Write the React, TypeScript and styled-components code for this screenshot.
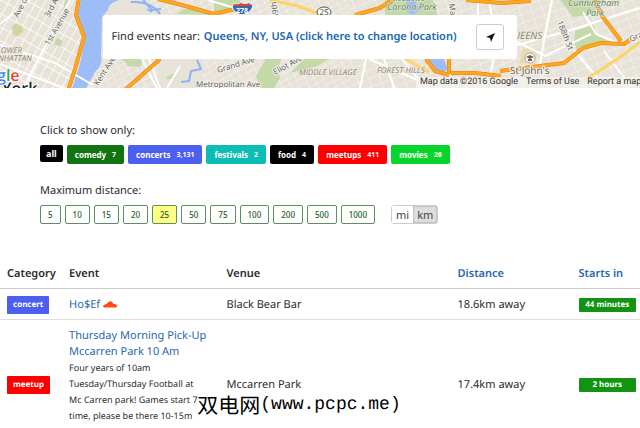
import React, { useState } from "react";
import styled, { createGlobalStyle } from "styled-components";

const GlobalStyle = createGlobalStyle`
  * { box-sizing: border-box; }
  body {
    margin: 0;
    background: #fff;
    color: #2b2b2b;
    font: 11px/16px "Noto Sans", "Open Sans", sans-serif;
    text-rendering: geometricPrecision;
    overflow: hidden;
  }
  button { font-family: inherit; cursor: pointer; }
  a { color: #2a67ad; text-decoration: none; }
`;

const Page = styled.main`
  position: relative;
`;

const MapHeader = styled.header`
  position: relative;
  display: flex;
  justify-content: center;
  height: 88px;
  padding: 15px 20px 29px 0;
  overflow: hidden;
  background: #e9e4da;
`;

const MapArt = styled.svg`
  position: absolute;
  inset: 0;
  width: 100%;
  height: 100%;
`;

const SearchCard = styled.div`
  position: relative;
  display: flex;
  align-items: center;
  gap: 4px;
  height: 44px;
  padding: 0 13px 0 9px;
  border-radius: 3px;
  background: #fff;
  white-space: nowrap;
`;

const PlaceLink = styled.a`
  color: #1c65b0;
  font-weight: 600;
`;

const LocateButton = styled.button`
  display: grid;
  place-items: center;
  width: 28px;
  height: 26px;
  margin-left: 16px;
  padding: 0;
  border: 1px solid #ccc;
  border-radius: 3px;
  background: #fff;
`;

const Attribution = styled.div`
  position: absolute;
  right: 0;
  bottom: 0;
  display: flex;
  gap: 8px;
  width: 35%;
  padding-left: 4px;
  overflow: hidden;
  background: rgba(245, 243, 239, 0.75);
  font: 9px/11px Roboto, sans-serif;
  color: #333;
  white-space: nowrap;
  a { color: #333; }
`;

const Filters = styled.section`
  display: flex;
  flex-direction: column;
  padding: 35px 40px 0;
`;

const FilterTitle = styled.h2`
  margin: 0;
  font-size: 11px;
  line-height: 16px;
  font-weight: 400;
`;

const ButtonRow = styled.div`
  display: flex;
  align-items: flex-start;
  gap: 4px;
  height: 19px;
  margin: 6px 0 19px;
`;

const CategoryButton = styled.button<{ $color: string; $compact?: boolean }>`
  display: flex;
  align-items: center;
  gap: 6px;
  height: ${(p) => (p.$compact ? 17 : 19)}px;
  padding: 0 ${(p) => (p.$compact ? 6 : 8)}px;
  border: 0;
  border-radius: 2px;
  background: ${(p) => p.$color};
  color: #fff;
  font-size: ${(p) => (p.$compact ? 9 : 8)}px;
  font-weight: 700;
`;

const Count = styled.span`
  font-size: 7px;
`;

const DistanceButton = styled.button<{ $active: boolean }>`
  height: 19px;
  padding: 0 7px;
  border: 1px solid #5d8f5d;
  border-radius: 2px;
  background: ${(p) => (p.$active ? "#ffff85" : "#fff")};
  color: #226022;
  font-size: 8px;
  font-weight: 500;
`;

const UnitGroup = styled.div`
  display: flex;
  margin-left: 12px;
  border: 1px solid #ccc;
  border-radius: 3px;
`;

const UnitButton = styled.button<{ $active: boolean }>`
  height: 17px;
  padding: 0 4px;
  border: 0;
  background: ${(p) => (p.$active ? "#dedede" : "#fff")};
  box-shadow: ${(p) => (p.$active ? "inset 0 0 2px #888" : "none")};
  color: #444;
  font-size: 11px;
  line-height: 15px;
`;

const EventTable = styled.table`
  width: 100%;
  margin-top: 15px;
  border-collapse: collapse;
  table-layout: fixed;
`;

const HeadCell = styled.th<{ $width: string }>`
  width: ${(p) => p.$width};
  padding: 8px 0 6px 7px;
  border-bottom: 1px solid #ccc;
  text-align: left;
  font-weight: 600;
  font-size: 11px;
  white-space: nowrap;
`;

const Cell = styled.td`
  padding: 7px 4px 5px 7px;
  border-bottom: 1px solid #ddd;
  vertical-align: middle;
`;

const EventCell = styled(Cell)<{ $long?: boolean }>`
  padding: ${(p) => (p.$long ? "8px 7px 23px" : "8px 7px 6px")};
`;

const Description = styled.p`
  margin: 0;
  font-size: 9px;
  line-height: 16px;
  white-space: pre-line;
`;

const CategoryTag = styled.span<{ $color: string }>`
  display: block;
  width: fit-content;
  padding: 0 6px;
  border-radius: 1px;
  background: ${(p) => p.$color};
  color: #fff;
  font-size: 8px;
  line-height: 18px;
  font-weight: 700;
`;

const StartTag = styled.span`
  display: block;
  border-radius: 1px;
  background: #129412;
  color: #fff;
  font-size: 8px;
  line-height: 14px;
  font-weight: 700;
  text-align: center;
`;

const CloudIcon = styled.svg`
  margin-left: 3px;
`;

const Watermark = styled.div`
  position: absolute;
  top: 392px;
  left: 0;
  right: 0;
  display: flex;
  justify-content: center;
  align-items: center;
  padding-right: 42px;
  color: #000;
  font: 21px/26px "Noto Sans CJK SC", sans-serif;
  text-shadow: 1px 0 #fff, -1px 0 #fff, 0 1px #fff, 0 -1px #fff;
  pointer-events: none;
`;

const Address = styled.span`
  font: 18px/26px "Liberation Mono", monospace;
`;

function CityMap() {
  return (
    <MapArt viewBox="0 0 640 88" preserveAspectRatio="xMidYMid slice" aria-hidden="true">
      <defs>
        <pattern id="manhattan" width="12" height="8" patternUnits="userSpaceOnUse" patternTransform="rotate(-61)">
          <path d="M0 0H12M0 0V8" stroke="#fff" strokeWidth="1.5" />
        </pattern>
        <pattern id="blocks" width="8" height="6" patternUnits="userSpaceOnUse" patternTransform="rotate(-28)">
          <path d="M0 0H8M0 0V6" stroke="#f9f7f3" strokeWidth="1" />
        </pattern>
        <pattern id="eastBlocks" width="11" height="8" patternUnits="userSpaceOnUse" patternTransform="rotate(-20)">
          <path d="M0 0H11M0 0V8" stroke="#faf8f4" strokeWidth="1" />
        </pattern>
      </defs>
      <rect width="640" height="88" fill="#e8e3d9" />
      <rect width="90" height="88" fill="url(#manhattan)" />
      <rect x="90" width="260" height="88" fill="url(#blocks)" />
      <rect x="350" width="290" height="88" fill="url(#eastBlocks)" />
      <path d="M163 59h40v29h-50zM108 4l10-4h30l16 14h-58z" fill="#e8e3d9" />
      <g fill="#c4d9a8">
        <path d="M15 23l8 4-4 6-8-4zM57 38l6 3-3 6-6-3zM65 0h4l-3 12-3-1z" />
        <path d="M176 14l8-5h20l8 6zM122 59h21l-3 8-12-1zM168 76l7-3v6h-9zM214 0h25l12 12h-37z" />
        <path d="M266 59h15l-3 11 2 8-6 10h-14l-4-12zM304 59h25l-12 7-27 7zM385 0h48l5 15h-53z" />
        <path d="M575 31l19-6 2 10 16 8-20 1-15 6-3-9zM560 0h40l-7 14-20 3z" />
      </g>
      <path d="M24 30l-7 7-5-3 3-9z" fill="#d9d19f" />
      <path d="M523 48l15 2-3 14-16-1z" fill="#ead9b4" />
      <g fill="#9dbdf8">
        <path d="M81 0h38q-12 4-11 10l-6 7-1 41q2 6-6 14l-9 16H72l8-24 5-26-7-24zM406 0h9l4 10-6 5-7-4zM427 59h17l4 10-5 4-9-2z" />
      </g>
      <path d="M197 60l4 9-10 2-2 10-8 1M131 2q20-1 29 12M143 0l9 10 9-1M147 9l5 3" fill="none" stroke="#8cb3f7" strokeWidth="2" />
      <g fill="none" stroke="#fff" strokeWidth="2">
        <path d="M0 45l55 18 38 22M23 88L70 0M0 24l30-24M0 64l80 30M142 59l15 29M149 59l11 29M180 66l-13 22M208 0l40 12M360 88l6-29M384 59l10 29M369 59l60 26M402 59l24 29M478 0v22l67 34 46-22M489 0l8 45-8 35M552 0l-7 35-5 30M500 50l74-21 66-21M583 12l13 22 22 9M574 50l32 38M604 51l26 34" />
      </g>
      <g fill="none" stroke="#ffd465" strokeWidth="3">
        <path d="M270 0l28 6 35 13M404 58l25 14M584 80l17-10 22-15 17-13" />
      </g>
      <g fill="none" strokeLinejoin="round">
        {[["#e48416", 4], ["#ffa51f", 3]].map(([color, width]) => (
          <path
            key={color}
            stroke={color}
            strokeWidth={width}
            d="M79-2l-3 17 8 22-9 32-7 22M158-1l24 6 32 9M214 14l25-6M125 90l35-31M355 15l25-7 14-9M426 59l9 12 14 4M449 59v15M451 73h24l26 3M500 71l40-5 24-3 19-15 18-5 23 1 12-8M466 0l35 3 30-2M594-2l8 18 19 25"
          />
        ))}
      </g>
      <g fontFamily="Open Sans, sans-serif" fontSize="8" fill="#5b5b58" stroke="#f4f1eb" strokeWidth="2" paintOrder="stroke">
        <text transform="translate(18 18) rotate(-62)">Ave of</text>
        <text transform="translate(49 18) rotate(-62)">3rd Ave</text>
        <text transform="translate(49 46) rotate(-60)">1st Avenue</text>
        <text transform="translate(98 86) rotate(-57)">Kent Ave</text>
        <text transform="translate(218 73) rotate(-17)">Grand Ave</text>
        <text transform="translate(275 75) rotate(-29)">Eliot Ave</text>
        <text x="196" y="87">Metropolitan Ave</text>
        <text transform="translate(279 18) rotate(-100)">69th</text>
        <text transform="translate(449 4) rotate(82)">Main</text>
        <text transform="translate(557 22) rotate(68)">188th St</text>
        <text transform="translate(631 42) rotate(-25)">Grand</text>
        <text x="510" y="74" fontSize="10">St John's</text>
      </g>
      <g fontFamily="Open Sans, sans-serif" fontSize="8" fontStyle="italic" fill="#8c8371" stroke="#f1ede5" strokeWidth="1" paintOrder="stroke">
        <text x="-3" y="53">LOWER</text>
        <text x="-13" y="61">MANHATTAN</text>
        <text x="299" y="75">MIDDLE VILLAGE</text>
        <text x="377" y="73">FOREST HILLS</text>
        <text x="506" y="39" fontSize="10">QUEENS</text>
        <g fill="#568050">
          <text x="391" y="1">Meadows</text>
          <text x="387" y="10" fontSize="9">Corona Park</text>
          <text x="568" y="6" fontSize="9">Cunningham</text>
          <text x="586" y="16" fontSize="9">Park</text>
        </g>
      </g>
      <path d="M234 4q4 1 7-1 4 2 8 0 4 1 4 3-2 7-11 9-9-2-10-9z" fill="#3a69b3" stroke="#fff" />
      <path d="M234 4q4 1 7-1 4 2 8 0l2 3h-18z" fill="#ce4a42" />
      <text x="242" y="13" textAnchor="middle" fontFamily="Open Sans, sans-serif" fontSize="7" fontWeight="700" fill="#fff">278</text>
      <ellipse cx="324" cy="12" rx="7" ry="5" fill="#fff" stroke="#555" />
      <text x="324" y="15" textAnchor="middle" fontFamily="Open Sans, sans-serif" fontSize="8" fill="#333">25</text>
      <circle cx="530" cy="58" r="5" fill="#fff" stroke="#aaa" />
      <path d="M526 57l4-2 4 2-4 2zM528 59v2h4v-2" fill="#71624f" />
      <g fontFamily="Open Sans, sans-serif" fontWeight="600" stroke="#fff" strokeWidth="2" paintOrder="stroke">
        <text x="2" y="94" fontSize="16" fill="#222">York</text>
        <text x="-3" y="81" fontSize="16"><tspan fill="#4285f4">g</tspan><tspan fill="#34a853">l</tspan><tspan fill="#ea4335">e</tspan></text>
      </g>
    </MapArt>
  );
}

const categories = [
  { name: "all", color: "#000" },
  { name: "comedy", count: "7", color: "#117411" },
  { name: "concerts", count: "3,131", color: "#4c5fee" },
  { name: "festivals", count: "2", color: "#0cbdb5" },
  { name: "food", count: "4", color: "#000" },
  { name: "meetups", count: "411", color: "#ff0000" },
  { name: "movies", count: "26", color: "#08d52b" },
];

const distances = [5, 10, 15, 20, 25, 50, 75, 100, 200, 500, 1000];

export default function App() {
  const [distance, setDistance] = useState(25);
  const [unit, setUnit] = useState("km");

  return (
    <Page>
      <GlobalStyle />
      <MapHeader>
        <CityMap />
        <SearchCard>
          <span>Find events near:</span>
          <PlaceLink href="#location">Queens, NY, USA (click here to change location)</PlaceLink>
          <LocateButton aria-label="Use my location">
            <svg width="9" height="9" viewBox="0 0 9 9"><path d="M9 0L5 9 4 5 0 4z" fill="#111" /></svg>
          </LocateButton>
        </SearchCard>
        <Attribution>
          <span>Map data ©2016 Google</span>
          <a href="#terms">Terms of Use</a>
          <a href="#report">Report a map</a>
        </Attribution>
      </MapHeader>
      <Filters>
        <FilterTitle>Click to show only:</FilterTitle>
        <ButtonRow>
          {categories.map((c) => (
            <CategoryButton key={c.name} $color={c.color} $compact={!c.count}>
              {c.name}
              {c.count && <Count>{c.count}</Count>}
            </CategoryButton>
          ))}
        </ButtonRow>
        <FilterTitle>Maximum distance:</FilterTitle>
        <ButtonRow>
          {distances.map((d) => (
            <DistanceButton key={d} $active={d === distance} onClick={() => setDistance(d)}>{d}</DistanceButton>
          ))}
          <UnitGroup>
            {["mi", "km"].map((u) => (
              <UnitButton key={u} $active={u === unit} onClick={() => setUnit(u)}>{u}</UnitButton>
            ))}
          </UnitGroup>
        </ButtonRow>
      </Filters>
      <EventTable>
        <thead>
          <tr>
            <HeadCell $width="9.7%">Category</HeadCell>
            <HeadCell $width="24.6%">Event</HeadCell>
            <HeadCell $width="36.1%">Venue</HeadCell>
            <HeadCell $width="18.9%"><a href="#distance">Distance</a></HeadCell>
            <HeadCell $width="10.7%"><a href="#starts">Starts in</a></HeadCell>
          </tr>
        </thead>
        <tbody>
          <tr>
            <Cell><CategoryTag $color="#4c5fee">concert</CategoryTag></Cell>
            <EventCell>
              <a href="#hosef">Ho$Ef</a>
              <CloudIcon width="14" height="7" viewBox="0 0 14 7" aria-label="SoundCloud" role="img">
                <path d="M0 5L1 4V6H0zM1 4L3 3V6.5H1zM3 3L4 2.5V6.5H3zM4 2.5L5.5 1V6.5H4zM5.5 .9Q9-.8 10.5 3 14 2.5 14 5 14 6.5 12.5 6.5H5.5z" fill="#ff4b12" />
              </CloudIcon>
            </EventCell>
            <Cell>Black Bear Bar</Cell>
            <Cell>18.6km away</Cell>
            <Cell><StartTag>44 minutes</StartTag></Cell>
          </tr>
          <tr>
            <Cell><CategoryTag $color="#ff0000">meetup</CategoryTag></Cell>
            <EventCell $long>
              <a href="#football">Thursday Morning Pick-Up Mccarren Park 10 Am</a>
              <Description>{"Four years of 10am\nTuesday/Thursday Football at\nMc Carren park! Games start 7\ntime, please be there 10-15m"}</Description>
            </EventCell>
            <Cell>Mccarren Park</Cell>
            <Cell>17.4km away</Cell>
            <Cell><StartTag>2 hours</StartTag></Cell>
          </tr>
        </tbody>
      </EventTable>
      <Watermark>双电网<Address>(www.pcpc.me)</Address></Watermark>
    </Page>
  );
}
